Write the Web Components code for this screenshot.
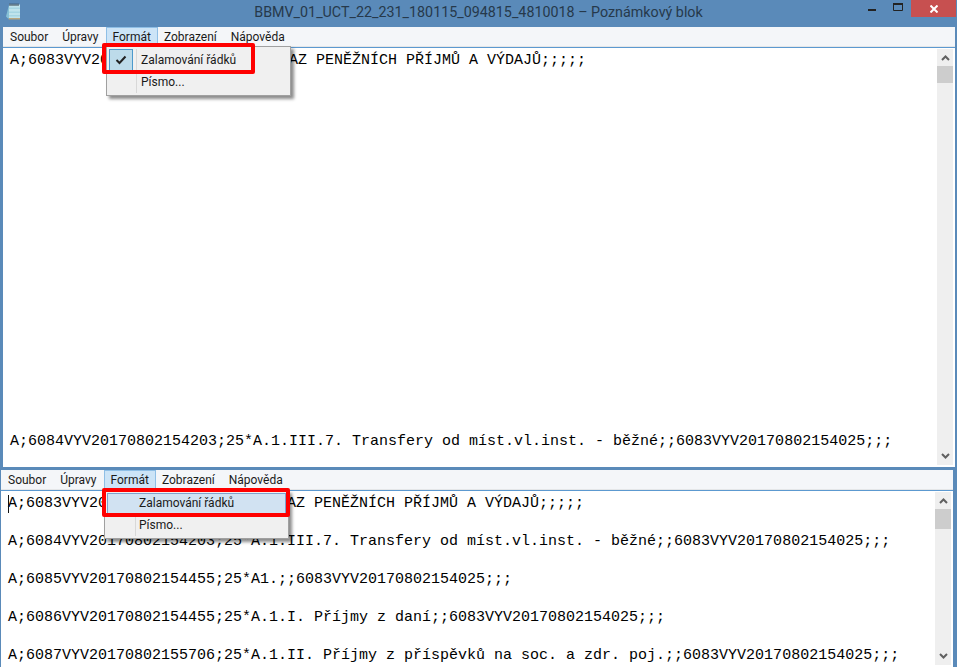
<!DOCTYPE html>
<html>
<head>
<meta charset="utf-8">
<style>
  html, body { margin: 0; height: 100%; overflow: hidden; background: #fff; }
  body { display: flex; flex-direction: column; width: 957px; height: 667px; font-family: Roboto, "Liberation Sans", sans-serif; }
</style>
</head>
<body>
<np-window title-text="BBMV_01_UCT_22_231_180115_094815_4810018 – Poznámkový blok" style="height:470px">
  <np-line>A;6083VYV20170802154025;;;;;VÝKAZ PENĚŽNÍCH PŘÍJMŮ A VÝDAJŮ;;;;;</np-line>
  <np-line slot="foot">A;6084VYV20170802154203;25*A.1.III.7. Transfery od míst.vl.inst. - běžné;;6083VYV20170802154025;;;</np-line>
</np-window>
<np-window bare style="height:197px">
  <np-line>A;6083VYV20170802154025;;;;;VÝKAZ PENĚŽNÍCH PŘÍJMŮ A VÝDAJŮ;;;;;</np-line>
  <np-line>A;6084VYV20170802154203;25*A.1.III.7. Transfery od míst.vl.inst. - běžné;;6083VYV20170802154025;;;</np-line>
  <np-line>A;6085VYV20170802154455;25*A1.;;6083VYV20170802154025;;;</np-line>
  <np-line>A;6086VYV20170802154455;25*A.1.I. Příjmy z daní;;6083VYV20170802154025;;;</np-line>
  <np-line>A;6087VYV20170802155706;25*A.1.II. Příjmy z příspěvků na soc. a zdr. poj.;;6083VYV20170802154025;;;</np-line>
</np-window>

<script>
const lineTemplate = document.createElement("template");
lineTemplate.innerHTML = `
  <style>
    :host {
      display: block;
      flex: none;
      height: 38px;
      font: 15px/19px "Liberation Mono", monospace;
      color: #000;
      white-space: nowrap;
    }
  </style>
  <slot></slot>
`;

class NpLine extends HTMLElement {
  constructor() {
    super();
    this.attachShadow({ mode: "open" });
    this.shadowRoot.appendChild(lineTemplate.content.cloneNode(true));
  }
}

const scrollTemplate = document.createElement("template");
scrollTemplate.innerHTML = `
  <style>
    :host {
      display: flex;
      flex-direction: column;
      width: 16px;
      background: #efefef;
      flex: none;
    }
    .btn {
      height: 17px;
      display: flex;
      align-items: center;
      justify-content: center;
      flex: none;
    }
    .thumb { height: 17px; background: #cdcdcd; flex: none; }
    :host([tall]) .thumb { height: 20px; }
    .rest { flex: 1; }
  </style>
  <div class="btn"><svg width="9" height="7" viewBox="0 0 9 7"><path d="M1 6 4.5 2.5 8 6" fill="none" stroke="#606060" stroke-width="2"/></svg></div>
  <div class="thumb"></div>
  <div class="rest"></div>
  <div class="btn"><svg width="9" height="7" viewBox="0 0 9 7"><path d="M1 1 4.5 4.5 8 1" fill="none" stroke="#606060" stroke-width="2"/></svg></div>
`;

class NpScrollbar extends HTMLElement {
  constructor() {
    super();
    this.attachShadow({ mode: "open" });
    this.shadowRoot.appendChild(scrollTemplate.content.cloneNode(true));
  }
}

const titleTemplate = document.createElement("template");
titleTemplate.innerHTML = `
  <style>
    :host {
      display: flex;
      align-items: flex-start;
      height: 27px;
      background: #5a8ab9;
      position: relative;
      flex: none;
    }
    .icon { margin: 3px 0 0 5px; }
    .title {
      position: absolute;
      left: 2px; right: 0; top: 2px;
      text-align: center;
      font: 14.3px/20px Roboto, "Liberation Sans", sans-serif;
      color: #26394b;
    }
    .controls { margin-left: auto; display: flex; align-items: flex-start; margin-right: -1px; }
    .ctl { width: 26px; height: 17px; display: flex; justify-content: center; }
    .close { width: 45px; background: #c75050; align-items: center; }
  </style>
  <svg class="icon" width="16" height="17" viewBox="0 0 16 17">
    <path d="M4 2 1 13.5 3 15.500h2V2z" fill="#86c0d6"/>
    <path d="M4 15h11v1.500H3.500z" fill="#b8a67f"/>
    <path d="M4 1.500h11V15H4z" fill="#bfe3ec"/>
    <path d="M4 4.500h11v1.500H4zM4 8.500h11v1.500H4zM4 12h11v1.500H4z" fill="#a6d5e2"/>
    <path d="M5 .5v2.500M7 .5v2.500M9 .5v2.500M11 .5v2.500M13 .5v2.500" stroke="#39424c"/>
  </svg>
  <div class="title"><slot></slot></div>
  <div class="controls">
    <div class="ctl"><svg style="margin-top:9px" width="8" height="2"><rect width="8" height="2" fill="#222"/></svg></div>
    <div class="ctl"><svg style="margin-top:3px" width="10" height="8"><path d="M.5 .5h9v7h-9z" fill="none" stroke="#222"/><rect width="10" height="2" fill="#222"/></svg></div>
    <div class="ctl close"><svg width="8" height="8"><path d="M.5 .5 7.500 7.500M7.500 .5 .5 7.500" stroke="#fff" stroke-width="2"/></svg></div>
  </div>
`;

class NpTitlebar extends HTMLElement {
  constructor() {
    super();
    this.attachShadow({ mode: "open" });
    this.shadowRoot.appendChild(titleTemplate.content.cloneNode(true));
  }
}

const menubarTemplate = document.createElement("template");
menubarTemplate.innerHTML = `
  <style>
    :host {
      display: flex;
      height: 19px;
      background: #f4f6f9;
      border-bottom: 1px solid #e4e6e8;
      font: 12px/21px Roboto, "Liberation Sans", sans-serif;
      color: #1a1a1a;
      flex: none;
    }
    span { padding: 0 7px; height: 19px; }
    .on { background: #cce4f7; box-shadow: inset 0 0 0 1px #8fbfe6; margin-right: -1px; }
  </style>
  <span>Soubor</span><span>Úpravy</span><span class="on">Formát</span><span>Zobrazení</span><span>Nápověda</span>
`;

class NpMenubar extends HTMLElement {
  constructor() {
    super();
    this.attachShadow({ mode: "open" });
    this.shadowRoot.appendChild(menubarTemplate.content.cloneNode(true));
  }
}

const menuTemplate = document.createElement("template");
menuTemplate.innerHTML = `
  <style>
    :host {
      display: block;
      position: absolute;
      width: 183px;
      height: 48px;
      background: #f0f0f0;
      border: 1px solid #a0a0a0;
      box-shadow: 3px 3px 3px rgba(0,0,0,.45);
      font: 12px/23px Roboto, "Liberation Sans", sans-serif;
      color: #1a1a1a;
    }
    :host([hot]) { height: 47px; line-height: 21px; }
    .sep { position: absolute; left: 29px; top: 2px; bottom: 2px; width: 1px; background: #d8d8d8; }
    :host([hot]) .sep { left: 30px; }
    .row { position: relative; height: 22px; margin: 2px 2px 0; padding-left: 32px; }
    .row + .row { margin-top: 0; }
    :host([hot]) .first { background: #d1e2f2; box-shadow: inset 0 0 0 1px #7da2ce; }
    .check {
      position: absolute; left: 0; top: 0; width: 24px; height: 22px;
      background: #bddbea; box-shadow: inset 0 0 0 1px #4b99cc;
      display: none; align-items: center; justify-content: center;
    }
    :host([checked]) .check { display: flex; }
    .mark {
      position: absolute;
      left: -3px; top: -3px; width: 188px; height: 29px;
      border: 4px solid #f00;
      border-radius: 2px;
      box-sizing: border-box;
    }
    :host([checked]) .mark { left: -5px; top: -4px; width: 153px; height: 31px; }
  </style>
  <div class="sep"></div>
  <div class="row first">
    <div class="check"><svg width="12" height="10" viewBox="0 0 12 10"><path d="M1.500 5 4.500 8 10.500 1.500" fill="none" stroke="#222" stroke-width="2"/></svg></div>
    Zalamování řádků
  </div>
  <div class="row">Písmo...</div>
  <div class="mark"></div>
`;

class NpMenu extends HTMLElement {
  constructor() {
    super();
    this.attachShadow({ mode: "open" });
    this.shadowRoot.appendChild(menuTemplate.content.cloneNode(true));
  }
}

const windowTemplate = document.createElement("template");
windowTemplate.innerHTML = `
  <style>
    :host {
      display: flex;
      flex-direction: column;
      position: relative;
      flex: none;
      overflow: hidden;
      background: #5a8ab9;
      padding: 0 2px 3px 0;
      box-sizing: border-box;
    }
    :host(:not([bare])) .inner { padding-left: 3px; }
    :host([bare]) { padding: 0 4px 0 1px; }
    .inner { display: flex; flex-direction: column; flex: 1; min-height: 0; }
    .body { flex: 1; display: flex; background: #fff; min-height: 0; box-shadow: 0 -1px 0 #5c99d0; margin-top: 1px; }
    .text { flex: 1; display: flex; flex-direction: column; padding: 3px 2px 16px 7px; min-width: 0; overflow: hidden; }
    :host([bare]) .text { padding: 3px 0 0 7px; }
    .foot { margin-top: auto; height: 19px; flex: none; }
    np-scrollbar { margin: 1px 2px 2px 0; }
    np-menu { left: 106px; top: 46px; }
    :host([bare]) np-menu { left: 104px; top: 20px; }
    .caret {
      display: none;
      position: absolute; left: 8px; top: 25px; width: 1px; height: 18px; background: #111;
    }
    :host([bare]) .caret { display: block; }
  </style>
  <np-titlebar></np-titlebar>
  <div class="inner">
    <np-menubar></np-menubar>
    <div class="body">
      <div class="text">
        <slot></slot>
        <div class="foot"><slot name="foot"></slot></div>
      </div>
      <np-scrollbar></np-scrollbar>
    </div>
  </div>
  <div class="caret"></div>
  <np-menu></np-menu>
`;

class NpWindow extends HTMLElement {
  constructor() {
    super();
    this.attachShadow({ mode: "open" });
    this.shadowRoot.appendChild(windowTemplate.content.cloneNode(true));
    const bar = this.shadowRoot.querySelector("np-titlebar");
    const menu = this.shadowRoot.querySelector("np-menu");
    if (this.hasAttribute("bare")) {
      bar.remove();
      menu.setAttribute("hot", "");
      this.shadowRoot.querySelector("np-scrollbar").setAttribute("tall", "");
    } else {
      bar.textContent = this.getAttribute("title-text");
      menu.setAttribute("checked", "");
    }
  }
}

customElements.define("np-line", NpLine);
customElements.define("np-scrollbar", NpScrollbar);
customElements.define("np-titlebar", NpTitlebar);
customElements.define("np-menubar", NpMenubar);
customElements.define("np-menu", NpMenu);
customElements.define("np-window", NpWindow);
</script>
</body>
</html>
